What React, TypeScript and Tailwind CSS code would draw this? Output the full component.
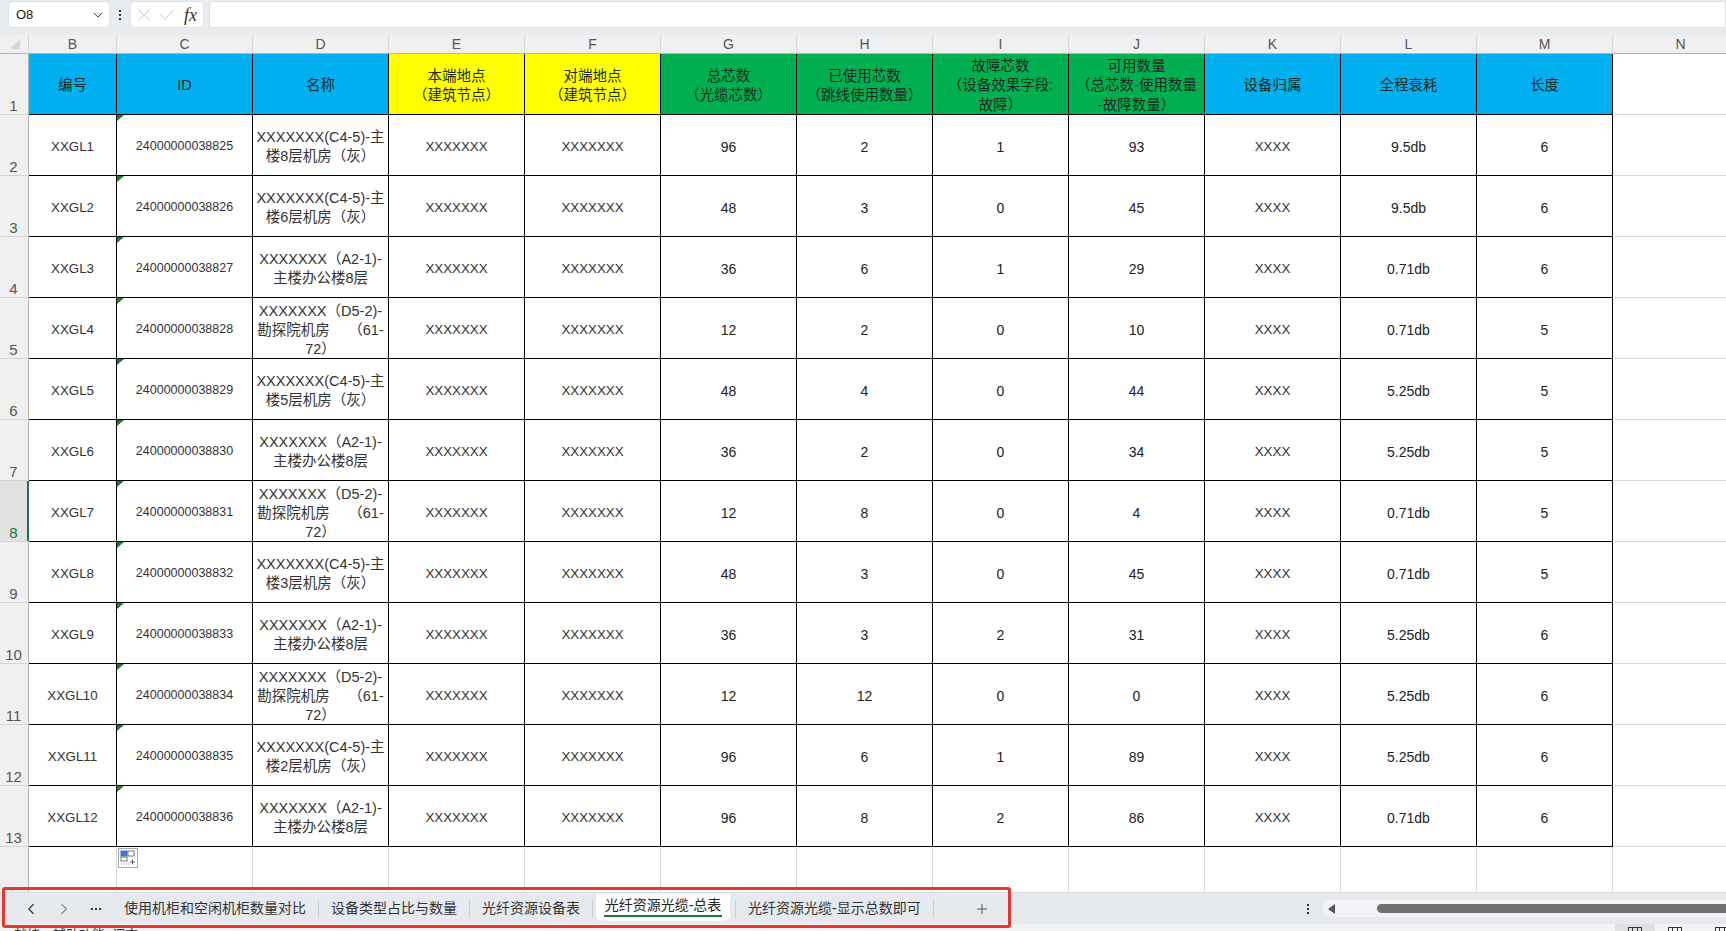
import React from 'react';
import { Check, ChevronDown, ChevronLeft, ChevronRight, Plus, X } from 'lucide-react';

const columnLetters = ['B', 'C', 'D', 'E', 'F', 'G', 'H', 'I', 'J', 'K', 'L', 'M', 'N'];

const headers = [
  { text: '编号', bg: 'bg-[#00b0f0]' },
  { text: 'ID', bg: 'bg-[#00b0f0]' },
  { text: '名称', bg: 'bg-[#00b0f0]' },
  { text: '本端地点\n（建筑节点）', bg: 'bg-[#ffff00]' },
  { text: '对端地点\n（建筑节点）', bg: 'bg-[#ffff00]' },
  { text: '总芯数\n（光缆芯数）', bg: 'bg-[#00b050]' },
  { text: '已使用芯数\n（跳线使用数量）', bg: 'bg-[#00b050]' },
  { text: '故障芯数\n（设备效果字段:\n故障）', bg: 'bg-[#00b050]' },
  { text: '可用数量\n（总芯数-使用数量\n-故障数量）', bg: 'bg-[#00b050]' },
  { text: '设备归属', bg: 'bg-[#00b0f0]' },
  { text: '全程衰耗', bg: 'bg-[#00b0f0]' },
  { text: '长度', bg: 'bg-[#00b0f0]' },
];

const c45 = (floor: number) => `XXXXXXX(C4-5)-主\n楼${floor}层机房（灰）`;
const a21 = 'XXXXXXX（A2-1)-\n主楼办公楼8层';
const d52 = 'XXXXXXX（D5-2)-\n勘探院机房\u3000 （61-\n72）';

const rows = [
  { code: 'XXGL1', id: '24000000038825', name: c45(8), total: 96, used: 2, fault: 1, free: 93, loss: '9.5db', len: 6 },
  { code: 'XXGL2', id: '24000000038826', name: c45(6), total: 48, used: 3, fault: 0, free: 45, loss: '9.5db', len: 6 },
  { code: 'XXGL3', id: '24000000038827', name: a21, total: 36, used: 6, fault: 1, free: 29, loss: '0.71db', len: 6 },
  { code: 'XXGL4', id: '24000000038828', name: d52, total: 12, used: 2, fault: 0, free: 10, loss: '0.71db', len: 5 },
  { code: 'XXGL5', id: '24000000038829', name: c45(5), total: 48, used: 4, fault: 0, free: 44, loss: '5.25db', len: 5 },
  { code: 'XXGL6', id: '24000000038830', name: a21, total: 36, used: 2, fault: 0, free: 34, loss: '5.25db', len: 5 },
  { code: 'XXGL7', id: '24000000038831', name: d52, total: 12, used: 8, fault: 0, free: 4, loss: '0.71db', len: 5 },
  { code: 'XXGL8', id: '24000000038832', name: c45(3), total: 48, used: 3, fault: 0, free: 45, loss: '0.71db', len: 5 },
  { code: 'XXGL9', id: '24000000038833', name: a21, total: 36, used: 3, fault: 2, free: 31, loss: '5.25db', len: 6 },
  { code: 'XXGL10', id: '24000000038834', name: d52, total: 12, used: 12, fault: 0, free: 0, loss: '5.25db', len: 6 },
  { code: 'XXGL11', id: '24000000038835', name: c45(2), total: 96, used: 6, fault: 1, free: 89, loss: '5.25db', len: 6 },
  { code: 'XXGL12', id: '24000000038836', name: a21, total: 96, used: 8, fault: 2, free: 86, loss: '0.71db', len: 6 },
];

// size and colour come in through className, the cell itself only sets the box
const Cell: React.FC<{ children?: React.ReactNode; className?: string }> = ({ children, className = 'pt-[4px] text-[13.33px] text-[#333]' }) => (
  <div className={`relative flex items-center justify-center text-center border-r border-b border-black h-[61px] ${className}`}>
    {children}
  </div>
);

const numCell = 'pt-[4px] text-[14px] text-[#222]';

const RowHeader: React.FC<{ n: number; active?: boolean }> = ({ n, active }) => (
  <div
    className={`relative flex items-end justify-center h-[61px] pb-[1px] pr-[1px] text-[15px] leading-[15px] border-b border-r border-b-[#d4d4d4] border-r-[#b4b4b4] ${
      active ? 'bg-[#e1e1e1] text-[#217346]' : 'bg-[#f0f0f0] text-[#555]'
    }`}
  >
    {n}
    {active && <div className="absolute right-[-1px] top-0 h-full w-[2px] bg-[#217346]" />}
  </div>
);

const Sep = () => <div className="w-px h-[18px] bg-[#c9cdd1]" />;

const Dots: React.FC<{ vertical?: boolean }> = ({ vertical }) => (
  <div className={`flex gap-[2px] ${vertical ? 'flex-col' : ''}`}>
    <div className="w-[2px] h-[2px] bg-[#333]" />
    <div className="w-[2px] h-[2px] bg-[#333]" />
    <div className="w-[2px] h-[2px] bg-[#333]" />
  </div>
);

const ViewIcon: React.FC = () => (
  <div className="w-[14px] h-[10px] border border-[#333] flex justify-evenly">
    <div className="w-px bg-[#333]" />
    <div className="w-px bg-[#333]" />
  </div>
);

const App: React.FC = () => {
  return (
    <div className="relative flex flex-col w-[1726px] h-[931px] overflow-hidden bg-white font-['Liberation_Sans','Noto_Sans_CJK_SC',sans-serif]">
      {/* formula bar */}
      <div className="flex items-start h-[35px] pt-px bg-[#e9ecef] shrink-0">
        <div className="flex items-center justify-between ml-[8px] w-[102px] h-[27px] bg-white rounded-[4px] border border-[#dcdfe3] pl-[7px] pr-[3px] text-[13px] text-[#222]">
          O8
          <ChevronDown size={16} strokeWidth={1.5} className="text-[#444]" />
        </div>
        <div className="flex items-center justify-center w-[20px] h-[27px]">
          <Dots vertical />
        </div>
        <div className="flex items-center w-[74px] h-[27px] bg-white rounded-[4px] border border-[#dcdfe3] pl-[3px] gap-[3px]">
          <X size={20} strokeWidth={0.9} className="text-[#b5b5b5]" />
          <Check size={20} strokeWidth={0.9} className="text-[#b5b5b5]" />
          <span className="ml-[4px] font-['Liberation_Serif',serif] italic text-[18px] leading-[18px] text-[#333]">fx</span>
        </div>
        <div className="flex-1 ml-[5px] h-[27px] bg-white rounded-l-[4px] border border-[#dcdfe3]" />
      </div>

      {/* sheet */}
      <div className="relative h-[857px] shrink-0 overflow-hidden">
        <div className="grid grid-cols-[29px_88px_repeat(12,136px)] w-[1750px]">
          {/* column letters */}
          <div className="flex items-center justify-center h-[19px] bg-[#f0f0f0] border-r border-b border-b-[#b4b4b4] border-r-[#d4d4d4]">
            <svg width="12" height="12" viewBox="0 0 12 12" className="ml-[2px]">
              <path d="M11 1V11H1Z" fill="#d6d6d6" />
            </svg>
          </div>
          {columnLetters.map((l) => (
            <div key={l} className="flex items-center justify-center h-[19px] bg-[#f0f0f0] border-r border-b border-r-[#d9d9d9] border-b-[#b4b4b4] text-[14px] text-[#555]">
              {l}
            </div>
          ))}

          {/* header row */}
          <RowHeader n={1} />
          {headers.map((h) => (
            <div key={h.text} className={`flex items-center justify-center text-center whitespace-pre pt-[4px] leading-[19.5px] border-r border-b border-black h-[61px] text-[14.5px] text-[#1c2b1f] ${h.bg}`}>
              {h.text}
            </div>
          ))}
          <div className="h-[61px] border-b border-[#d9d9d9]" />

          {/* data rows */}
          {rows.map((r, i) => (
            <React.Fragment key={r.code}>
              <RowHeader n={i + 2} active={i === 6} />
              <Cell>{r.code}</Cell>
              <Cell className="pt-[2px] text-[12.5px] text-[#333]">
                <div className="absolute left-0 top-0 w-[7px] h-[6px] bg-[#217b2c] [clip-path:polygon(0_0,100%_0,0_100%)]" />
                {r.id}
              </Cell>
              <Cell className="pt-[4px] whitespace-pre leading-[19px] text-[14.5px] text-[#333]">{r.name}</Cell>
              <Cell>XXXXXXX</Cell>
              <Cell>XXXXXXX</Cell>
              <Cell className={numCell}>{r.total}</Cell>
              <Cell className={numCell}>{r.used}</Cell>
              <Cell className={numCell}>{r.fault}</Cell>
              <Cell className={numCell}>{r.free}</Cell>
              <Cell>XXXX</Cell>
              <Cell className={numCell}>{r.loss}</Cell>
              <Cell className={numCell}>{r.len}</Cell>
              <div className="h-[61px] border-b border-[#d9d9d9]" />
            </React.Fragment>
          ))}

          {/* empty row under the table */}
          <div className="h-[46px] bg-[#f0f0f0] border-r border-[#b4b4b4]" />
          {columnLetters.map((l) => (
            <div key={l} className="h-[46px] border-r border-[#d9d9d9]" />
          ))}
        </div>

        {/* paste options button */}
        <div className="absolute left-[118px] top-[813px] flex items-center justify-center w-[20px] h-[20px] bg-white border border-[#a9a9a9]">
          <svg width="16" height="16" viewBox="0 0 16 16" fill="none">
            <rect x="1" y="1" width="6" height="5" fill="#4472c4" stroke="#4472c4" />
            <rect x="8" y="1" width="6" height="5" stroke="#777" />
            <rect x="1" y="7" width="6" height="4" stroke="#777" />
            <path d="M1 14h1M3.5 14h1M6 14h1M8.5 14h1" stroke="#777" />
            <path d="M12.5 9.5v5M10 12h5" stroke="#555" />
          </svg>
        </div>
      </div>

      {/* sheet tabs */}
      <div className="flex items-center h-[32px] shrink-0 bg-[#e6eaee] border-t border-[#dcdcdc] text-[14px] text-[#333]">
        <div className="flex items-center justify-center w-[22px] ml-[20px]">
          <ChevronLeft size={18} strokeWidth={1.5} className="text-[#333]" />
        </div>
        <div className="flex items-center justify-center w-[22px] ml-[11px]">
          <ChevronRight size={18} strokeWidth={1.5} className="text-[#8b8b8b]" />
        </div>
        <div className="flex items-center justify-center w-[22px] ml-[10px]">
          <Dots />
        </div>
        <div className="ml-[4px] pl-[13px] pr-[12px] whitespace-nowrap">使用机柜和空闲机柜数量对比</div>
        <Sep />
        <div className="px-[12px] whitespace-nowrap">设备类型占比与数量</div>
        <Sep />
        <div className="px-[12px] whitespace-nowrap">光纤资源设备表</div>
        <Sep />
        <div className="ml-[3px] self-start flex flex-col items-center w-[134px] h-[28px] bg-white rounded-b-[6px] pt-[2px] text-[#222]">
          <span className="whitespace-nowrap leading-[20px]">光纤资源光缆-总表</span>
          <div className="w-[118px] h-[2px] bg-[#217346]" />
        </div>
        <div className="ml-[5px]"><Sep /></div>
        <div className="px-[12px] whitespace-nowrap">光纤资源光缆-显示总数即可</div>
        <Sep />
        <Plus size={16} strokeWidth={1.2} className="ml-[40px] text-[#333]" />
        <div className="flex-1" />
        <Dots vertical />
        <div className="relative flex items-center ml-[14px] w-[403px] h-[17px] bg-[#f3f4f5] rounded-l-full">
          <div className="ml-[5px] w-0 h-0 border-y-[5px] border-y-transparent border-r-[7px] border-r-[#555]" />
          <div className="absolute left-[54px] right-0 h-[9px] bg-[#707070] rounded-l-full" />
        </div>
      </div>

      {/* status bar, mostly below the window edge */}
      <div className="relative flex items-start h-[7px] shrink-0 bg-[#f3f3f3] overflow-hidden">
        <span className="ml-[14px] mt-[3px] text-[13px] leading-[16px] text-[#333] whitespace-nowrap">就绪　辅助功能: 调查</span>
        <div className="flex-1" />
        <div className="flex justify-center w-[40px] h-full bg-[#e0e0e0] pt-[3px]"><ViewIcon /></div>
        <div className="ml-[13px] pt-[3px]"><ViewIcon /></div>
        <div className="ml-[33px] w-[11px] pt-[3px]"><ViewIcon /></div>
      </div>

      {/* red annotation frame */}
      <div className="absolute left-[2px] top-[887px] w-[1009px] h-[41px] border-[3px] border-[#e8352e] rounded-[3px] pointer-events-none" />
    </div>
  );
};

export default App;
